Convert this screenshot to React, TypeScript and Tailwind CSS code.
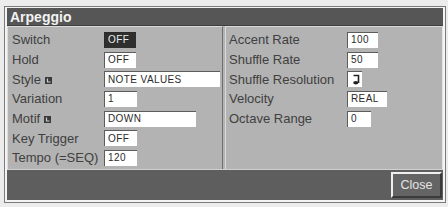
import React from 'react';

type Row = {
    label: string;
    value?: string;
    width: string;
    icon?: boolean;
    selected?: boolean;
    note?: boolean;
};

const leftRows: Row[] = [
    { label: 'Switch', value: 'OFF', width: 'w-[32px]', selected: true },
    { label: 'Hold', value: 'OFF', width: 'w-[32px]' },
    { label: 'Style', value: 'NOTE VALUES', width: 'w-[116px]', icon: true },
    { label: 'Variation', value: '1', width: 'w-[33px]' },
    { label: 'Motif', value: 'DOWN', width: 'w-[92px]', icon: true },
    { label: 'Key Trigger', value: 'OFF', width: 'w-[33px]' },
    { label: 'Tempo (=SEQ)', value: '120', width: 'w-[33px]' },
];

const rightRows: Row[] = [
    { label: 'Accent Rate', value: '100', width: 'w-[31px]' },
    { label: 'Shuffle Rate', value: '50', width: 'w-[31px]' },
    { label: 'Shuffle Resolution', width: 'w-[15px]', note: true },
    { label: 'Velocity', value: 'REAL', width: 'w-[40px]' },
    { label: 'Octave Range', value: '0', width: 'w-[24px]' },
];

function ListIcon() {
    return (
        <svg width="7" height="7" viewBox="0 0 7 7" className="inline-block ml-[4px] align-[0px]">
            <rect x="0" y="0" width="7" height="7" fill="#3a3a3a" />
            <path d="M2.5 1.5V5H5.5" stroke="#cfcfcf" strokeWidth="1.2" fill="none" />
        </svg>
    );
}

function NoteIcon() {
    return (
        <svg width="9" height="11" viewBox="0 0 9 11">
            <path d="M2.5 1.5H7.5V9" stroke="#222" strokeWidth="1.6" fill="none" />
            <ellipse cx="4.8" cy="8.8" rx="2.6" ry="1.8" fill="#222" />
        </svg>
    );
}

function ParamRow({ row, labelWidth }: { row: Row; labelWidth: string }) {
    return (
        <div className="flex items-center h-[19.7px]">
            <div className={`${labelWidth} text-[13px] text-[#404040] whitespace-nowrap leading-none`}>
                {row.label}
                {row.icon && <ListIcon />}
            </div>
            <div
                className={`${row.width} h-[16px] flex items-center border-t border-l ${
                    row.selected
                        ? 'bg-[#2f2f2f] text-[#ececec] border-[#2a2a2a]'
                        : 'bg-white text-[#2a2a2a] border-[#5c5c5c]'
                } ${row.note ? 'justify-center' : 'pl-[3px]'} text-[10px] leading-none tracking-[0.4px]`}
            >
                {row.note ? <NoteIcon /> : row.value}
            </div>
        </div>
    );
}

export default function App() {
    return (
        <div
            className="w-[448px] h-[207px] bg-[#ececec] pt-[6px] pl-[4px]"
            style={{ fontFamily: '"Liberation Sans", Arial, sans-serif' }}
        >
            <div className="w-[442px] h-[197px] border border-[#7a7a7a] flex flex-col">
                <div className="flex-1 flex flex-col border-x-2 border-b-2 border-t border-[#f4f4f4]">
                    <div className="h-[18px] bg-[#565656] border-b border-[#3e3e3e] flex items-center pl-[3px]">
                        <span className="text-[14px] font-bold text-[#f2f2f2] leading-none">Arpeggio</span>
                    </div>
                    <div className="h-[143px] bg-[#b3b3b3] flex gap-[2px]">
                        <div className="w-[216px] border-t border-l border-[#dadada] border-r border-r-[#6e6e6e] pt-[3px] pl-[4px]">
                            {leftRows.map(r => (
                                <ParamRow key={r.label} row={r} labelWidth="w-[92px]" />
                            ))}
                        </div>
                        <div className="flex-1 border-t border-l border-[#dadada] border-r border-r-[#e4e4e4] pt-[3px] pl-[3px]">
                            {rightRows.map(r => (
                                <ParamRow key={r.label} row={r} labelWidth="w-[118px]" />
                            ))}
                        </div>
                    </div>
                    <div className="flex-1 bg-[#5e5e5e] border-t border-[#d0d0d0] flex justify-end items-start pt-[2px] pr-[1px]">
                        <button className="w-[51px] h-[26px] bg-[#646464] border-t-2 border-l-2 border-[#efefef] border-b-2 border-r-2 border-b-[#3a3a3a] border-r-[#3a3a3a] text-[12.5px] text-[#e4e4e4] leading-none">
                            Close
                        </button>
                    </div>
                </div>
            </div>
        </div>
    );
}
